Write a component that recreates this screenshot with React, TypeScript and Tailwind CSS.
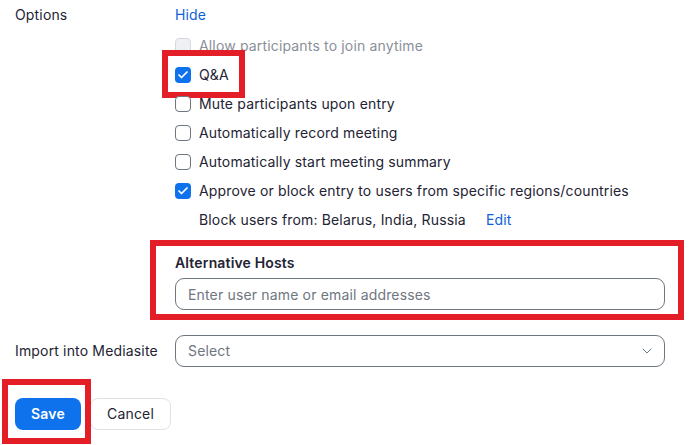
import { Check, ChevronDown } from 'lucide-react';

type Opt = { label: string; checked?: boolean; disabled?: boolean; marked?: boolean };

const options: Opt[] = [
  { label: 'Allow participants to join anytime', disabled: true },
  { label: 'Q&A', checked: true, marked: true },
  { label: 'Mute participants upon entry' },
  { label: 'Automatically record meeting' },
  { label: 'Automatically start meeting summary' },
  { label: 'Approve or block entry to users from specific regions/countries', checked: true },
];

function Box({ checked, disabled }: { checked?: boolean; disabled?: boolean }) {
  if (checked) {
    return (
      <span className="flex h-4 w-4 shrink-0 items-center justify-center rounded-[4px] bg-[#0e72ed]">
        <Check className="h-3 w-3 text-white" strokeWidth={3.5} />
      </span>
    );
  }
  return (
    <span
      className={
        disabled
          ? 'h-4 w-4 shrink-0 rounded-[4px] border border-[#d5d9de] bg-[#eef0f3]'
          : 'h-4 w-4 shrink-0 rounded-[4px] border-[1.5px] border-[#6e7680] bg-white'
      }
    />
  );
}

export default function App() {
  return (
    <div className="h-[445px] w-[689px] bg-white pt-[5px] text-[14px] leading-5 tracking-[0.16px] text-[#232333] [font-family:Inter,'Noto_Sans',sans-serif]">
      <div className="flex">
        <div className="w-[175px] shrink-0 pl-[15px]">Options</div>
        <div className="w-[490px]">
          <button className="text-[#0e5fd8]">Hide</button>
          <div className="mt-[11px] flex flex-col gap-[9px]">
            {options.map((o) => (
              <label key={o.label} className="flex h-5 items-center">
                <span className="relative flex items-center gap-2">
                  <Box checked={o.checked} disabled={o.disabled} />
                  <span className={o.disabled ? 'text-[#8b9098]' : ''}>{o.label}</span>
                  {o.marked && (
                    <span className="pointer-events-none absolute -top-[15px] -bottom-[13px] -left-[13px] -right-[16px] border-[6px] border-[#e41e26]" />
                  )}
                </span>
              </label>
            ))}
            <div className="flex h-5 items-center pl-6">
              <span>Block users from: Belarus, India, Russia</span>
              <button className="ml-[20px] text-[#0e5fd8]">Edit</button>
            </div>
          </div>

          <div className="mt-[10px] ml-[-25px] mr-[-19px] border-[6px] border-[#e41e26] pt-[7px] pb-1 pl-[19px] pr-[13px]">
            <div className="font-semibold">Alternative Hosts</div>
            <input
              placeholder="Enter user name or email addresses"
              className="mt-[5px] h-8 w-full rounded-[9px] border border-[#6e7680] px-3 text-[14px] tracking-[0.16px] outline-none placeholder:text-[#6e7680]"
            />
          </div>
        </div>
      </div>

      <div className="mt-[15px] flex items-center">
        <div className="w-[175px] shrink-0 pl-[15px]">Import into Mediasite</div>
        <div className="flex h-8 w-[490px] items-center justify-between rounded-[9px] border border-[#6e7680] pl-3 pr-[9px] text-[#6e7680]">
          <span>Select</span>
          <ChevronDown className="h-4 w-4 text-[#5f7b98]" strokeWidth={1.5} />
        </div>
      </div>

      <div className="mt-[31px] flex gap-[9px] pl-[15px]">
        <div className="relative">
          <button className="h-8 w-[66px] rounded-lg bg-[#0e72ed] font-semibold text-white">Save</button>
          <span className="pointer-events-none absolute -top-[19px] -bottom-[14px] -left-[13px] -right-[10px] border-[6px] border-[#e41e26]" />
        </div>
        <button className="h-8 w-[81px] rounded-lg border border-[#dfe3e8] bg-white text-[#232333]">Cancel</button>
      </div>
    </div>
  );
}
